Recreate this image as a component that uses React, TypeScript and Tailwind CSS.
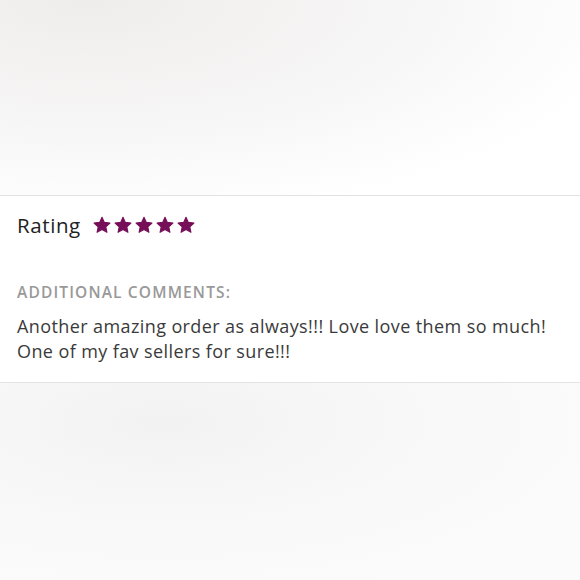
import React from "react";

function Star() {
  return (
    <svg width="18" height="18" viewBox="0 0 24 23" className="fill-[#760f58]">
      <path
        d="M12 1.2l3.2 6.8 7.4 0.9-5.5 5.1 1.5 7.3L12 17.6l-6.6 3.7 1.5-7.3L1.4 8.9l7.4-0.9z"
        stroke="#760f58"
        strokeWidth="1.4"
        strokeLinejoin="round"
      />
    </svg>
  );
}

export default function App() {
  return (
    <div className="w-[580px] h-[580px] flex flex-col font-['Open_Sans',sans-serif]">
      <div className="h-[195px] bg-[radial-gradient(ellipse_at_15%_0%,#efedec_0%,#f7f6f6_45%,#ffffff_80%)]" />
      <div className="h-[188px] bg-white border-y border-[#e3e3e3] px-[17px] flex flex-col">
        <div className="flex items-center gap-[12px] mt-[16px] h-[26px]">
          <span className="text-[20.5px] font-medium tracking-[0.6px] text-[#222] leading-none">Rating</span>
          <div className="flex gap-[3px]">
            <Star />
            <Star />
            <Star />
            <Star />
            <Star />
          </div>
        </div>
        <div className="mt-[47px] text-[15.5px] font-semibold tracking-[1.15px] text-[#999] leading-none">
          ADDITIONAL COMMENTS:
        </div>
        <p className="mt-[13px] text-[18px] tracking-[0.4px] leading-[25px] text-[#3a3a3a]">
          Another amazing order as always!!! Love love them so much!
          <br />
          One of my fav sellers for sure!!!
        </p>
      </div>
      <div className="flex-1 bg-[radial-gradient(ellipse_at_28%_20%,#f2f2f2_0%,#f8f8f8_40%,#fcfbfb_80%)]" />
    </div>
  );
}
